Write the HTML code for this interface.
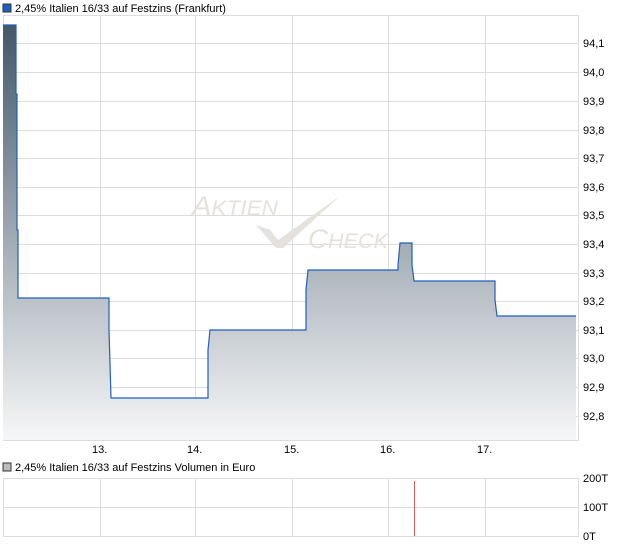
<!DOCTYPE html>
<html><head><meta charset="utf-8"><style>
body{margin:0;background:#fff;width:620px;height:546px;overflow:hidden;font-family:"Liberation Sans",sans-serif;}
</style></head><body>
<svg width="620" height="546" xmlns="http://www.w3.org/2000/svg" font-family="Liberation Sans, sans-serif" font-size="11" fill="#000">
<defs>
<linearGradient id="g" x1="0" y1="25" x2="0" y2="440" gradientUnits="userSpaceOnUse">
<stop offset="0" stop-color="#44586a"/>
<stop offset="0.65" stop-color="#b9c0c6"/>
<stop offset="1" stop-color="#f6f7f8"/>
</linearGradient>
</defs>
<rect x="3" y="4" width="8" height="8" fill="#1f5fbf" stroke="#333" stroke-width="1"/>
<text x="15" y="12">2,45% Italien 16/33 auf Festzins (Frankfurt)</text>
<g stroke="#dcdcdc" stroke-width="1">
<rect x="3.5" y="15.5" width="575" height="425" fill="none"/>
<line x1="100.5" y1="15" x2="100.5" y2="440"/><line x1="195.5" y1="15" x2="195.5" y2="440"/><line x1="292.5" y1="15" x2="292.5" y2="440"/><line x1="388.5" y1="15" x2="388.5" y2="440"/><line x1="485.5" y1="15" x2="485.5" y2="440"/>
<line x1="3" y1="43.5" x2="578" y2="43.5"/><line x1="3" y1="72.5" x2="578" y2="72.5"/><line x1="3" y1="101.5" x2="578" y2="101.5"/><line x1="3" y1="130.5" x2="578" y2="130.5"/><line x1="3" y1="158.5" x2="578" y2="158.5"/><line x1="3" y1="187.5" x2="578" y2="187.5"/><line x1="3" y1="215.5" x2="578" y2="215.5"/><line x1="3" y1="244.5" x2="578" y2="244.5"/><line x1="3" y1="273.5" x2="578" y2="273.5"/><line x1="3" y1="301.5" x2="578" y2="301.5"/><line x1="3" y1="330.5" x2="578" y2="330.5"/><line x1="3" y1="358.5" x2="578" y2="358.5"/><line x1="3" y1="387.5" x2="578" y2="387.5"/><line x1="3" y1="416.5" x2="578" y2="416.5"/>
</g>
<g fill="#e5e1dc" font-style="italic" font-size="27">
<text x="192" y="215" textLength="86" lengthAdjust="spacingAndGlyphs">A<tspan font-size="21">KTIEN</tspan></text>
<text x="308" y="248" textLength="80" lengthAdjust="spacingAndGlyphs">C<tspan font-size="21">HECK</tspan></text>
</g>
<path d="M256,225 L270,230 L278,240 L340,196 L283,248 L276,248 Z" fill="#e5e1dc"/>
<path d="M3,440 L3,25 L16,25 L16,94 L17,94 L17,230 L18,230 L18,298 L109,298 L109,330 L111,398 L208,398 L208,350 L210,330 L306,330 L306,290 L308,270 L398,270 L398,265 L400,243 L412,243 L412,265 L414,281 L495,281 L495,300 L497,316 L576,316 L576,440 Z" fill="url(#g)"/>
<path d="M3,25 L16,25 L16,94 L17,94 L17,230 L18,230 L18,298 L109,298 L109,330 L111,398 L208,398 L208,350 L210,330 L306,330 L306,290 L308,270 L398,270 L398,265 L400,243 L412,243 L412,265 L414,281 L495,281 L495,300 L497,316 L576,316" fill="none" stroke="#1f5fbf" stroke-width="1.2"/>
<g>
<text x="583" y="47">94,1</text><text x="583" y="76">94,0</text><text x="583" y="105">93,9</text><text x="583" y="134">93,8</text><text x="583" y="162">93,7</text><text x="583" y="191">93,6</text><text x="583" y="219">93,5</text><text x="583" y="248">93,4</text><text x="583" y="277">93,3</text><text x="583" y="305">93,2</text><text x="583" y="334">93,1</text><text x="583" y="362">93,0</text><text x="583" y="391">92,9</text><text x="583" y="420">92,8</text>
</g>
<text x="92" y="453">13.</text><text x="187" y="453">14.</text><text x="284" y="453">15.</text><text x="380" y="453">16.</text><text x="477" y="453">17.</text>
<rect x="3" y="463" width="8" height="8" fill="#bbb" stroke="#333" stroke-width="1"/>
<text x="15" y="471">2,45% Italien 16/33 auf Festzins Volumen in Euro</text>
<g stroke="#dcdcdc" stroke-width="1">
<rect x="3.5" y="478.5" width="575" height="58" fill="none"/>
<line x1="3" y1="507.5" x2="578" y2="507.5"/>
<line x1="100.5" y1="478" x2="100.5" y2="536"/><line x1="195.5" y1="478" x2="195.5" y2="536"/><line x1="292.5" y1="478" x2="292.5" y2="536"/><line x1="388.5" y1="478" x2="388.5" y2="536"/><line x1="485.5" y1="478" x2="485.5" y2="536"/>
</g>
<line x1="414.5" y1="481" x2="414.5" y2="536" stroke="#e06060" stroke-width="1"/>
<text x="583" y="482">200T</text><text x="583" y="511">100T</text><text x="583" y="540">0T</text>
</svg>
</body></html>
